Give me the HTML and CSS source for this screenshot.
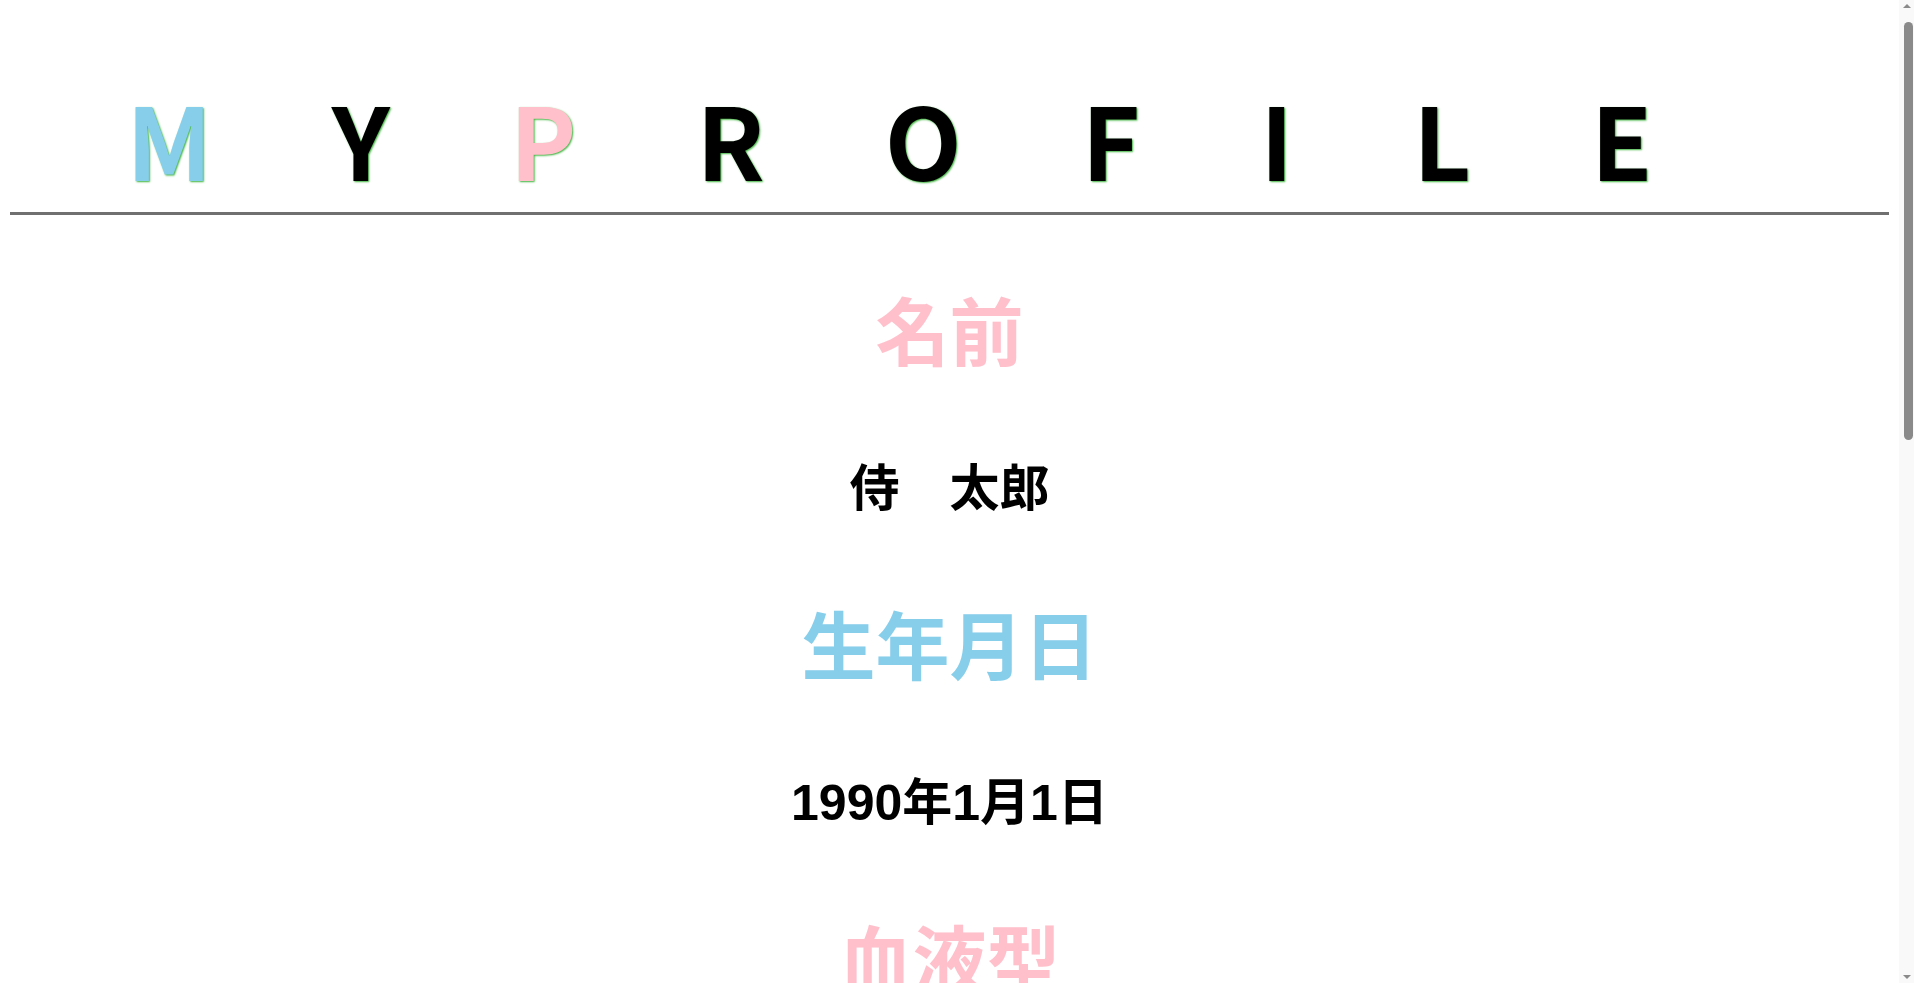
FILE: index.html
```html
<!DOCTYPE html>
<html lang="ja">
<head>
<meta charset="utf-8">
<title>MY PROFILE</title>
<link rel="stylesheet" href="styles.css">
</head>
<body>
<header class="header">
  <h1 class="title"><span class="blue">M</span>Y<span class="pink">P</span>ROFILE</h1>
  <div class="rule"></div>
</header>
<main class="profile">
  <section class="item">
    <h2 class="label pink">名前</h2>
    <p class="value">侍　太郎</p>
  </section>
  <section class="item">
    <h2 class="label blue">生年月日</h2>
    <p class="value">1990年1月1日</p>
  </section>
  <section class="item">
    <h2 class="label pink">血液型</h2>
    <p class="value">A型</p>
  </section>
  <section class="item">
    <h2 class="label blue">出身地</h2>
    <p class="value">東京都</p>
  </section>
  <section class="item">
    <h2 class="label pink">趣味</h2>
    <p class="value">プログラミング</p>
  </section>
</main>
<div class="scrollbar" aria-hidden="true">
  <span class="arrow up"></span>
  <span class="thumb"></span>
  <span class="arrow down"></span>
</div>
</body>
</html>
```
FILE: styles.css
```css
html, body {
  background: #ffffff;
}
body {
  margin: 8px 23px 8px 8px;
  font-family: "Noto Sans CJK JP", sans-serif;
  color: #000;
}
.header {
  display: flex;
  flex-direction: column;
}
.title {
  margin: 0;
  padding-top: 60px;
  text-align: center;
  font-size: 100px;
  line-height: 140px;
  font-weight: 700;
  letter-spacing: 120px;
  text-shadow: 1px 1px 2px #3cb33c;
}
.blue { color: #87ceeb; }
.pink { color: #ffc0cb; }
.rule {
  height: 3px;
  margin: 4px 2px 0;
  background: #707070;
}
.profile {
  display: flex;
  flex-direction: column;
  align-items: center;
}
.item {
  display: flex;
  flex-direction: column;
  align-items: center;
}
.label {
  margin: 61px 0 0;
  font-size: 74px;
  line-height: 104px;
  font-weight: 700;
}
.item + .item .label {
  margin-top: 61px;
}
.value {
  margin: 79px 0 10px;
  font-family: "Liberation Sans", "Noto Sans CJK JP", sans-serif;
  font-size: 50px;
  line-height: 60px;
  font-weight: 700;
}
.scrollbar {
  position: fixed;
  top: 0;
  right: 0;
  width: 15px;
  height: 100vh;
  background: #f9f9f9;
}
.thumb {
  position: absolute;
  top: 22px;
  left: 5px;
  width: 9px;
  height: 418px;
  border-radius: 5px;
  background: #8a8a8a;
}
.arrow {
  position: absolute;
  left: 4px;
  width: 0;
  height: 0;
  border-left: 4px solid transparent;
  border-right: 4px solid transparent;
}
.arrow.up {
  top: 4px;
  border-bottom: 4px solid #8a8a8a;
}
.arrow.down {
  bottom: 4px;
  border-top: 4px solid #8a8a8a;
}
```
